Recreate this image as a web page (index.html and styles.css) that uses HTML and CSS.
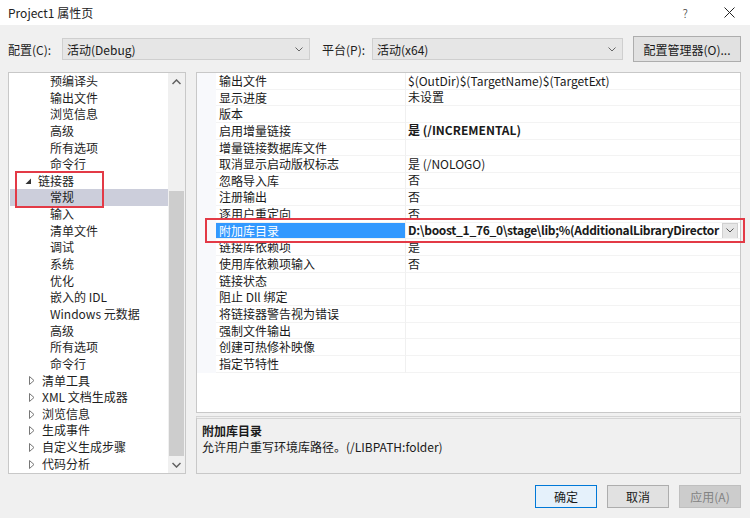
FILE: index.html
```html
<!DOCTYPE html>
<html lang="zh-CN">
<head>
    <meta charset="UTF-8">
    <title>Project1 属性页</title>
    <link rel="stylesheet" href="styles.css">
</head>
<body>
    <div class="titlebar">
        <span class="title">Project1 属性页</span>
        <span class="help">?</span>
        <svg class="close" width="11" height="11" viewBox="0 0 11 11"><path d="M0.5 0.5 L10.5 10.5 M10.5 0.5 L0.5 10.5" stroke="#222" stroke-width="1" fill="none"/></svg>
    </div>

    <div class="main">
        <div class="config-row">
            <label class="cfg-label">配置(C):</label>
            <div class="combo combo-config">
                <span>活动(Debug)</span>
                <svg width="8" height="5" viewBox="0 0 8 5"><polyline points="0.5,0.5 4,4 7.5,0.5" stroke="#666" fill="none"/></svg>
            </div>
            <label class="cfg-label platform">平台(P):</label>
            <div class="combo combo-platform">
                <span>活动(x64)</span>
                <svg width="8" height="5" viewBox="0 0 8 5"><polyline points="0.5,0.5 4,4 7.5,0.5" stroke="#666" fill="none"/></svg>
            </div>
            <button class="btn cfg-manager">配置管理器(O)...</button>
        </div>

        <div class="content">
            <div class="tree">
                <div class="tree-rows" id="treeRows"></div>
                <div class="scrollbar">
                    <svg class="sb-arrow" width="9" height="6" viewBox="0 0 9 6"><polyline points="0.5,5 4.5,1 8.5,5" stroke="#606060" stroke-width="1.5" fill="none"/></svg>
                    <div class="sb-track"><div class="sb-thumb"></div></div>
                    <svg class="sb-arrow" width="9" height="6" viewBox="0 0 9 6"><polyline points="0.5,1 4.5,5 8.5,1" stroke="#606060" stroke-width="1.5" fill="none"/></svg>
                </div>
                <div class="mark mark-tree"></div>
            </div>

            <div class="right">
                <div class="grid" id="propGrid"></div>
                <div class="desc">
                    <div class="desc-title">附加库目录</div>
                    <div class="desc-text">允许用户重写环境库路径。(/LIBPATH:folder)</div>
                </div>
                <div class="mark mark-grid"></div>
            </div>
        </div>

        <div class="buttons">
            <button class="btn btn-ok">确定</button>
            <button class="btn">取消</button>
            <button class="btn btn-disabled">应用(A)</button>
        </div>
    </div>

    <script>
        const treeItems = [
            ['child', '预编译头'], ['child', '输出文件'], ['child', '浏览信息'], ['child', '高级'],
            ['child', '所有选项'], ['child', '命令行'], ['open', '链接器'], ['sel', '常规'],
            ['child', '输入'], ['child', '清单文件'], ['child', '调试'], ['child', '系统'],
            ['child', '优化'], ['child', '嵌入的 IDL'], ['child', 'Windows 元数据'], ['child', '高级'],
            ['child', '所有选项'], ['child', '命令行'], ['closed', '清单工具'], ['closed', 'XML 文档生成器'],
            ['closed', '浏览信息'], ['closed', '生成事件'], ['closed', '自定义生成步骤'], ['closed', '代码分析']
        ];

        const treeRows = document.getElementById('treeRows');
        treeItems.forEach(([kind, text]) => {
            const row = document.createElement('div');
            row.className = 'tree-row ' + kind;
            let arrow = '';
            if (kind === 'open') {
                arrow = '<svg class="tw" width="7" height="7" viewBox="0 0 7 7"><polygon points="6,0.5 6,6 0.5,6" fill="#333"/></svg>';
            } else if (kind === 'closed') {
                arrow = '<svg class="tw" width="6" height="9" viewBox="0 0 6 9"><polygon points="0.5,0.5 5,4.5 0.5,8.5" fill="none" stroke="#777"/></svg>';
            }
            row.innerHTML = arrow + '<span>' + text + '</span>';
            treeRows.appendChild(row);
        });

        const props = [
            ['输出文件', '$(OutDir)$(TargetName)$(TargetExt)'],
            ['显示进度', '未设置'],
            ['版本', ''],
            ['启用增量链接', '是 (/INCREMENTAL)', 'bold'],
            ['增量链接数据库文件', ''],
            ['取消显示启动版权标志', '是 (/NOLOGO)'],
            ['忽略导入库', '否'],
            ['注册输出', '否'],
            ['逐用户重定向', '否'],
            ['附加库目录', 'D:\\boost_1_76_0\\stage\\lib;%(AdditionalLibraryDirector', 'sel'],
            ['链接库依赖项', '是'],
            ['使用库依赖项输入', '否'],
            ['链接状态', ''],
            ['阻止 Dll 绑定', ''],
            ['将链接器警告视为错误', ''],
            ['强制文件输出', ''],
            ['创建可热修补映像', ''],
            ['指定节特性', '']
        ];

        const grid = document.getElementById('propGrid');
        props.forEach(([name, value, flag]) => {
            const row = document.createElement('div');
            row.className = 'prop-row' + (flag ? ' ' + flag : '');
            let extra = '';
            if (flag === 'sel') {
                extra = '<span class="drop"><svg width="8" height="5" viewBox="0 0 8 5"><polyline points="0.5,0.5 4,4 7.5,0.5" stroke="#555" fill="none"/></svg></span>';
            }
            row.innerHTML = `
                <div class="gutter"></div>
                <div class="prop-name">${name}</div>
                <div class="prop-value"><span class="val">${value}</span>${extra}</div>
            `;
            grid.appendChild(row);
        });
    </script>
</body>
</html>
```

FILE: styles.css
```css
* {
    box-sizing: border-box;
}
body {
    margin: 0;
    width: 750px;
    height: 518px;
    overflow: hidden;
    font-family: "Noto Sans CJK SC", "Noto Sans", sans-serif;
    font-size: 12px;
    color: #1a1a1a;
    background-color: #f0f0f0;
}
.titlebar {
    height: 25px;
    background-color: #ffffff;
    display: flex;
    align-items: center;
    padding-left: 8px;
}
.title {
    flex: 1;
    font-size: 12px;
    color: #222;
}
.help {
    font-size: 12px;
    color: #444;
    margin-right: 36px;
    font-weight: 300;
}
.close {
    margin-right: 15px;
}
.main {
    padding: 0 9px 0 8px;
}
.config-row {
    display: flex;
    align-items: center;
    height: 26px;
    margin-top: 11px;
}
.cfg-label {
    width: 54px;
    color: #222;
}
.cfg-label.platform {
    width: 50px;
    margin-left: 12px;
}
.combo {
    height: 22px;
    background-color: #e6e6e6;
    border: 1px solid #cfcfcf;
    display: flex;
    align-items: center;
    justify-content: space-between;
    padding: 0 6px 0 4px;
}
.combo-config {
    width: 248px;
}
.combo-platform {
    width: 251px;
}
.btn {
    font-family: inherit;
    font-size: 12px;
    background-color: #e1e1e1;
    border: 1px solid #adadad;
    color: #1a1a1a;
    padding: 0;
    height: 23px;
}
.cfg-manager {
    width: 108px;
    height: 26px;
    margin-left: 10px;
}
.content {
    display: flex;
    gap: 10px;
    margin-top: 10px;
}
.tree {
    position: relative;
    width: 178px;
    height: 402px;
    background-color: #ffffff;
    border: 1px solid #c8c8c8;
    display: flex;
}
.tree-rows {
    flex: 1;
    padding-left: 1px;
}
.tree-row {
    height: 16.65px;
    line-height: 16.65px;
    display: flex;
    align-items: center;
    white-space: nowrap;
    color: #1e1e1e;
}
.tree-row.child,
.tree-row.sel {
    padding-left: 40px;
}
.tree-row.sel {
    background-color: #cccedb;
}
.tree-row.open {
    padding-left: 15px;
}
.tree-row.closed {
    padding-left: 19px;
}
.tw {
    margin-right: 6px;
}
.tree-row.closed .tw {
    margin-right: 7px;
}
.scrollbar {
    width: 17px;
    background-color: #f0f0f0;
    display: flex;
    flex-direction: column;
    align-items: center;
}
.sb-arrow {
    margin: 6px 0 5px;
}
.sb-track {
    flex: 1;
    width: 100%;
    position: relative;
}
.sb-thumb {
    position: absolute;
    left: 1px;
    right: 1px;
    top: 101px;
    height: 265px;
    background-color: #cdcdcd;
}
.mark {
    position: absolute;
    border: 2px solid #e33a46;
}
.mark-tree {
    left: 6px;
    top: 98px;
    width: 89px;
    height: 37px;
}
.right {
    position: relative;
    width: 545px;
    display: flex;
    flex-direction: column;
    gap: 3px;
}
.grid {
    height: 341px;
    background-color: #ffffff;
    border: 1px solid #c8c8c8;
}
.prop-row {
    display: flex;
    height: 16.65px;
    line-height: 16.65px;
}
.gutter {
    width: 19px;
    background-color: #f8f9fc;
}
.prop-name {
    width: 190px;
    padding-left: 3px;
    border-bottom: 1px solid #f3f3f3;
    border-right: 1px solid #f0f0f0;
    white-space: nowrap;
}
.prop-value {
    flex: 1;
    padding-left: 2px;
    border-bottom: 1px solid #f3f3f3;
    white-space: nowrap;
    overflow: hidden;
    display: flex;
    align-items: center;
}
.val {
    flex: 1;
    overflow: hidden;
}
.prop-row.bold .val,
.prop-row.sel .val {
    font-weight: bold;
}
.prop-row.sel .val {
    letter-spacing: -0.3px;
}
.prop-row.sel .prop-name {
    background-color: #3399ff;
    color: #ffffff;
}
.drop {
    width: 16px;
    height: 16px;
    margin-right: 2px;
    background-color: #e6e6e6;
    border: 1px solid #d0d0d0;
    display: flex;
    align-items: center;
    justify-content: center;
}
.mark-grid {
    left: 9px;
    top: 146px;
    width: 540px;
    height: 25px;
}
.desc {
    height: 58px;
    border: 1px solid #c8c8c8;
    border-top: 3px double #d4d4d4;
    padding: 4px 0 0 5px;
    line-height: 16px;
}
.desc-title {
    font-weight: bold;
}
.buttons {
    display: flex;
    justify-content: flex-end;
    gap: 10px;
    margin-top: 11px;
}
.buttons .btn {
    width: 62px;
}
.btn-ok {
    background-color: #e5f1fb;
    border: 1px solid #0078d7;
}
.btn-disabled {
    background-color: #cccccc;
    border-color: #bfbfbf;
    color: #838383;
}
```
